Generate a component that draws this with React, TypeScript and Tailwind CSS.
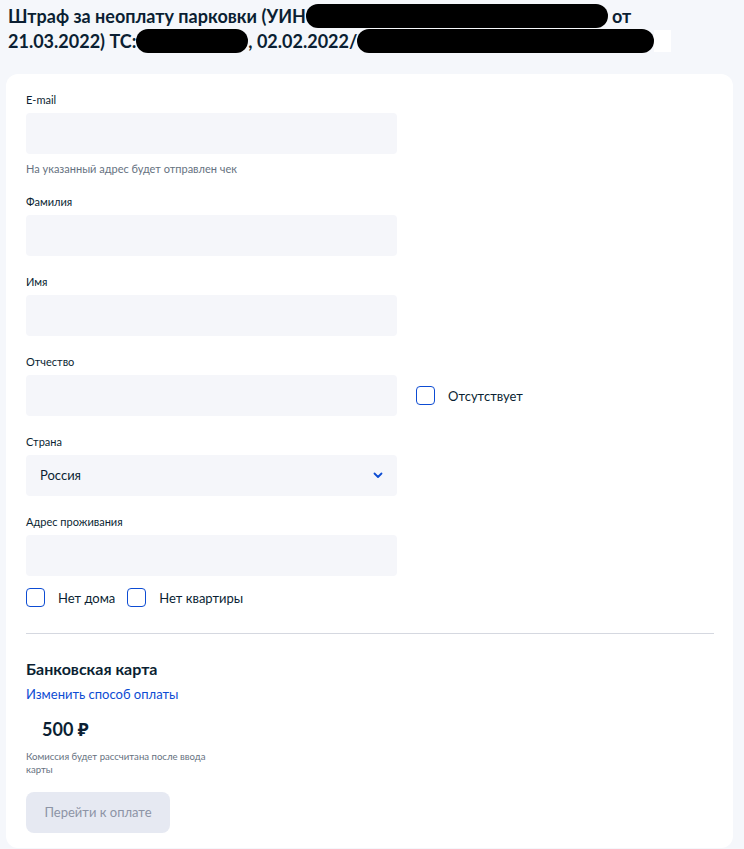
const FONT = "font-['Lato','Noto_Sans',sans-serif]";

interface FieldProps {
  label: string;
  hint?: string;
  children?: React.ReactNode;
}

function Field({ label, hint, children }: FieldProps) {
  return (
    <div className="flex flex-col">
      <label className="text-[11px] leading-[14px] text-[#0b1f33] mb-1.5">{label}</label>
      {children ?? <div className="w-[371px] h-[41px] rounded bg-[#f5f6fa]" />}
      {hint && <p className="mt-2 text-[11px] leading-[14px] text-[#66727f]">{hint}</p>}
    </div>
  );
}

function Checkbox({ label }: { label: string }) {
  return (
    <div className="flex items-center">
      <span className="w-[19px] h-[19px] rounded border-[1.5px] border-[#0d4cd3] bg-white" />
      <span className="ml-[13px] text-[13px] leading-[18px] text-[#0b1f33]">{label}</span>
    </div>
  );
}

function Redacted({ w }: { w: number }) {
  return (
    <span
      className="inline-block h-[24px] align-middle rounded-full bg-black -mt-1"
      style={{ width: w }}
    />
  );
}

export default function App() {
  return (
    <div className={`min-h-[849px] bg-[#f5f7fb] ${FONT}`}>
      {/* Header */}
      <h1 className="px-2 pt-1 text-[18px] leading-[25px] font-bold text-[#0b1f33]">
        Штраф за неоплату парковки (УИН<Redacted w={302} />
        <span className="ml-1">от</span>
        <br />
        21.03.2022) ТС:<Redacted w={112} />, 02.02.2022/<Redacted w={297} />
        <span className="inline-block w-[17px] h-[22px] bg-white align-middle -mt-1" />
      </h1>

      {/* Card */}
      <div className="mx-1.5 mt-[20px] w-[727px] rounded-xl bg-white px-5 pt-[19px] pb-[15px]">
        <div className="flex flex-col gap-[19px]">
          <Field label="E-mail" hint="На указанный адрес будет отправлен чек" />
          <Field label="Фамилия" />
          <Field label="Имя" />
          <Field label="Отчество">
            <div className="flex items-center">
              <div className="w-[371px] h-[41px] rounded bg-[#f5f6fa]" />
              <div className="ml-[19px]">
                <Checkbox label="Отсутствует" />
              </div>
            </div>
          </Field>
          <Field label="Страна">
            <div className="w-[371px] h-[41px] rounded bg-[#f5f6fa] flex items-center justify-between pl-[14px] pr-[14px]">
              <span className="text-[13px] text-[#0b1f33]">Россия</span>
              <svg width="10" height="7" viewBox="0 0 10 7" fill="none">
                <path d="M1.5 1.5L5 5L8.5 1.5" stroke="#0d4cd3" strokeWidth="1.8" strokeLinecap="round" strokeLinejoin="round" />
              </svg>
            </div>
          </Field>
          <div>
            <Field label="Адрес проживания" />
            <div className="mt-3 flex items-center gap-3">
              <Checkbox label="Нет дома" />
              <Checkbox label="Нет квартиры" />
            </div>
          </div>
        </div>

        <div className="mt-[26px] h-px w-[688px] bg-[#d5d8e0]" />

        {/* Payment */}
        <div className="mt-[25px]">
          <h2 className="text-[16px] leading-[20px] font-bold text-[#0b1f33]">Банковская карта</h2>
          <a className="mt-[6px] block text-[13px] leading-[18px] text-[#0d4cd3]">Изменить способ оплаты</a>
          <p className="mt-[15px] pl-4 text-[18px] leading-[22px] font-bold text-[#0b1f33]">500 ₽</p>
          <p className="mt-[10px] w-[190px] text-[9.6px] leading-[13px] text-[#66727f]">
            Комиссия будет рассчитана после ввода карты
          </p>
          <button className="mt-[16px] h-[41px] w-[144px] rounded-lg bg-[#e6e9f2] text-[13px] text-[#8d94a6]">
            Перейти к оплате
          </button>
        </div>
      </div>
    </div>
  );
}
